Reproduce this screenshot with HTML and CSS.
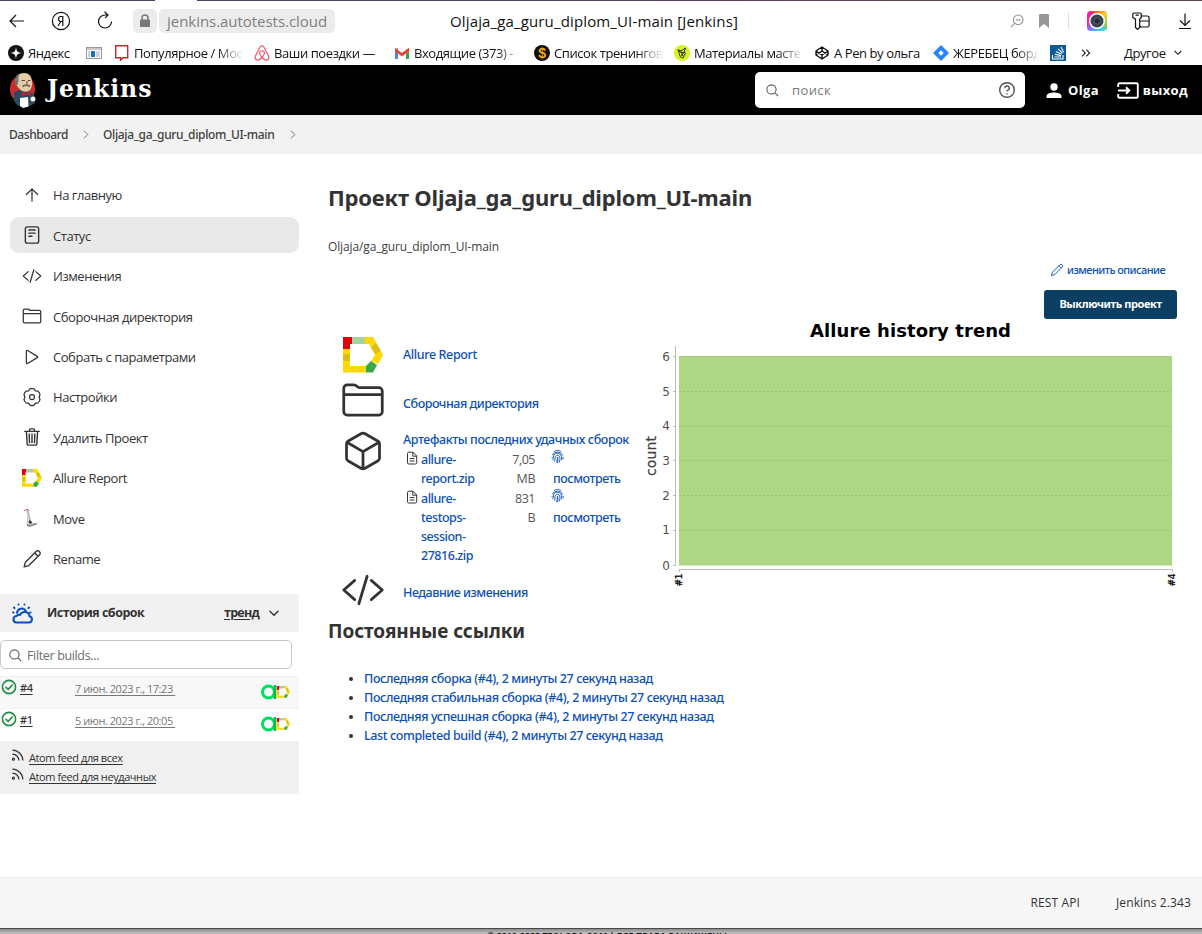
FILE: index.html
```html
<!DOCTYPE html>
<html lang="ru">
<head>
<meta charset="utf-8">
<title>Oljaja_ga_guru_diplom_UI-main [Jenkins]</title>
<link rel="stylesheet" href="styles.css">
</head>
<body>
<svg class="defs" width="0" height="0" aria-hidden="true">
  <defs>
    <symbol id="folder" viewBox="0 0 512 512"><path d="M440 432H72a40 40 0 01-40-40V120a40 40 0 0140-40h75.89a40 40 0 0122.19 6.72l27.84 18.56a40 40 0 0022.19 6.72H440a40 40 0 0140 40v240a40 40 0 01-40 40zM32 192h448"/></symbol>
    <symbol id="code" viewBox="0 0 512 512"><path d="M160 368L32 256l128-112M352 368l128-112-128-112M304 96l-96 320"/></symbol>
    <symbol id="pencil" viewBox="0 0 24 24"><path d="M2.5 21.5l1.6-5.6L17.2 2.8a2.3 2.3 0 013.3 0l.7.7a2.3 2.3 0 010 3.3L8.1 19.900zM15.300 4.700l4 4"/></symbol>
    <symbol id="search" viewBox="0 0 512 512"><path d="M221 64a157 157 0 10157 157A157 157 0 00221 64zM338 338l110 110"/></symbol>
    <symbol id="allure" viewBox="0 0 40 36">
      <path fill="#ffd900" d="M0 12h7v17h16v6.500H0z"/><path fill="#dcbf14" d="M0 17h7v7H0z"/>
      <path fill="#e3000f" d="M0 0h9v7H7v5H0z"/><path fill="#a5d3a0" d="M9 0h14v7H9z"/>
      <path fill="#ffd900" d="M22 0h8l10 18-5 9-7-3 4-6-6-11h-4z"/><path fill="#dcbf14" d="M33 6l5 8-6 3-4-7z"/>
      <path fill="#3aa844" d="M23 29l5-5 6 4-4 7.500h-7z"/>
    </symbol>
    <symbol id="check" viewBox="0 0 16 16"><circle cx="8" cy="8" r="6.600"/><path d="M5 8.200l2.200 2.200 4-4.400"/></symbol>
    <symbol id="feed" viewBox="0 0 14 14"><path d="M1.500 1.200A11.500 11.500 0 0112.800 12.500M1.500 5.500a7 7 0 017 7"/><circle cx="2.600" cy="11" r="1.100"/></symbol>
    <symbol id="file" viewBox="0 0 12 14"><path d="M1.500 2.500A1.300 1.300 0 012.800 1.200H7L10.700 5v6.700a1.300 1.300 0 01-1.300 1.300H2.800a1.300 1.300 0 01-1.300-1.300zM6.800 1.200V5.200H10.700M3.700 7.600h4.800M3.700 10h4.800"/></symbol>
    <symbol id="finger" viewBox="0 0 14 16"><path d="M3 3.200C5.500.8 9 1 11.200 3.300M1.300 6.700C3.300 2.300 10.400 2.100 12.600 6.800M2 12c.7-1.600.2-3 .7-4.700 1.300-3.700 7.300-3.500 8.500.3.400 1.500.3 3 .1 4.400M3.600 13.500c1.200-2 .4-3.900 1-5.300 1-1.900 4-1.800 4.800.2.500 1.700.2 3.900-.4 5.900M5.700 14.700c1.200-2 1-4.100 1.300-6 .8 2 .5 4.500 0 6.300M1 9.500l.3-1M13 8.500l.1 2.500"/></symbol>
    <symbol id="ao" viewBox="0 0 29 16"><circle cx="7.500" cy="8" r="6" fill="none" stroke="#00e05a" stroke-width="3"/><path d="M12.800 1h2.400v14h-2.400z" fill="#0aba4c"/><use href="#allure" x="15.500" y="2" width="13.500" height="12"/></symbol>
    <linearGradient id="cam" x1="0" y1="0" x2="1" y2="1"><stop offset="0" stop-color="#ef2297"/><stop offset=".3" stop-color="#f0268b"/><stop offset=".5" stop-color="#8a6cff"/><stop offset=".75" stop-color="#35c8f2"/><stop offset="1" stop-color="#5be0b0"/></linearGradient>
    <linearGradient id="cam2" x1="0" y1="0" x2="1" y2="1"><stop offset="0" stop-color="#ff4a1a"/><stop offset=".5" stop-color="#ffd21a"/><stop offset="1" stop-color="#3cd070"/></linearGradient>
  </defs>
</svg>

<div class="chrome">
  <div class="tabline"></div>
  <div class="toolbar">
    <svg class="tb-back" width="16" height="14" viewBox="0 0 16 14"><path d="M15 7H1.500M7 1L1 7l6 6"/></svg>
    <svg class="tb-ya" width="20" height="20" viewBox="0 0 20 20"><circle cx="10" cy="10" r="8.600"/><path d="M11.800 15V5.500H10a2.400 2.400 0 000 5h1.800M9.800 10.500L7 15"/></svg>
    <svg class="tb-reload" width="16" height="18" viewBox="0 0 16 18"><path d="M14.500 10.500A6.500 6.500 0 118 4h3M7.500.800L11 4 8 7.200"/></svg>
    <span class="lock"><svg width="12" height="14" viewBox="0 0 12 14"><path class="shackle" d="M3 6V4a3 3 0 016 0v2"/><rect class="case" x="1" y="5.500" width="10" height="7.500" rx="1"/></svg></span>
    <span class="url">jenkins.autotests.cloud</span>
    <span class="page-title">Oljaja_ga_guru_diplom_UI-main [Jenkins]</span>
    <svg class="tb-zoom" width="14" height="14" viewBox="0 0 14 14"><circle cx="8.200" cy="5.800" r="4.800"/><path d="M4.800 9.200L.800 13.200M6 5.800h4.400"/></svg>
    <svg class="tb-mark" width="10" height="14" viewBox="0 0 10 14"><path d="M0 1a1 1 0 011-1h8a1 1 0 011 1v13L5 10l-5 4z" fill="#969696"/></svg>
    <span class="tb-sep"></span>
    <svg class="tb-cam" width="20" height="20" viewBox="0 0 20 20"><rect width="20" height="20" rx="4" fill="url(#cam)"/><path d="M6 0h10a4 4 0 014 4v12a4 4 0 01-1 2.600z" fill="url(#cam2)"/><circle cx="10" cy="10" r="8" fill="#fff"/><circle cx="10" cy="10" r="6.500" fill="#3a3f4b"/><circle cx="10" cy="10" r="3.200" fill="#1f2a3a" stroke="#56657a"/></svg>
    <svg class="tb-key" width="18" height="18" viewBox="0 0 18 18"><path d="M2 1h6a1.300 1.300 0 011.300 1.300V5.500L7.700 7v8.500L5.500 17.400l-2-1.900V7.200L.8 5.500V2.300A1.300 1.300 0 012 1zM3.500 3.200h3.300M9.500 4h5.800a1.800 1.800 0 011.800 1.800v7.400a1.800 1.800 0 01-1.800 1.800H9.500a1.500 1.500 0 01-1.500-1.500M8 9h9"/></svg>
    <svg class="tb-down" width="12" height="16" viewBox="0 0 12 16"><path d="M6 .500v11.500M1 7.500l5 5 5-5M0 15.500h12"/></svg>
  </div>
  <div class="bookmarks">
    <span class="bm b78"><svg width="16" height="16" viewBox="0 0 16 16"><circle cx="8" cy="8" r="8" fill="#111"/><path d="M8 2c.6 4.600 1.400 5.400 6 6-4.600.6-5.400 1.400-6 6-.6-4.600-1.400-5.400-6-6 4.600-.6 5.400-1.400 6-6z" fill="#fff"/></svg><span>Яндекс</span></span>
    <span class="bm b29"><svg width="16" height="12" viewBox="0 0 16 12"><rect x=".5" y=".5" width="15" height="11" fill="#fff" stroke="#999"/><path d="M1 2h14" stroke="#c8c8c8" stroke-width="2"/><rect x="5" y="4" width="4" height="6" fill="#1272c8"/><path d="M10 5h4M10 7h4M10 9h4M2 5h2M2 7h2M2 9h2" stroke="#9ab"/></svg></span>
    <span class="bm b139"><svg width="14" height="16" viewBox="0 0 14 16"><path d="M.700.700h12v12H8l-2.500 2.600v-2.600H.700z" fill="none" stroke="#c22a2a" stroke-width="1.400"/></svg><span class="wide fade">Популярное / Мос</span></span>
    <span class="bm b140"><svg width="16" height="16" viewBox="0 0 16 16"><path d="M8 12.500C5.500 9.500 5.200 8.300 5.600 7.300c.8-1.800 4-1.800 4.800 0 .4 1 .1 2.200-2.400 5.200-2 2.300-4.500 3.300-6 2-1.200-1-1-2.500-.4-3.800L5.800 2.500C6.800.3 9.200.3 10.200 2.500l4.200 8.200c.6 1.300.8 2.800-.4 3.800-1.500 1.300-4 .3-6-2z" fill="none" stroke="#f0566a" stroke-width="1.200"/></svg><span class="fade late">Ваши поездки —</span></span>
    <span class="bm b140"><svg width="16" height="12" viewBox="0 0 16 12"><path d="M1 12V1.500h3V12z" fill="#4285f4"/><path d="M12 12V2h3v10z" fill="#34a853"/><path d="M12 2.500L15 1v3.500l-3 2z" fill="#fbbc04"/><path d="M1 .800L8 6l7-5.200v3.400L8 9.500 1 4.200z" fill="#ea4335"/></svg><span class="fade">Входящие (373) -</span></span>
    <span class="bm b140"><svg width="16" height="16" viewBox="0 0 16 16"><circle cx="8" cy="8" r="8" fill="#111"/><text x="8" y="13" text-anchor="middle" class="dollar">$</text></svg><span class="fade">Список тренингов</span></span>
    <span class="bm b141"><svg width="16" height="16" viewBox="0 0 16 16"><circle cx="8" cy="8" r="8" fill="#d8f51a"/><path d="M4 4.500l3 1.500 4.500-3-1.500 4 1.500 1-2.500 5-3-1.500-1-4zM7 7l2 4M10 7l-3 4M4 6l6 2" fill="none" stroke="#333"/></svg><span class="fade">Материалы масте</span></span>
    <span class="bm b118"><svg width="14" height="14" viewBox="0 0 14 14"><path d="M7 1l6 4v4l-6 4-6-4V5zM7 1v4M7 9v4M1 5l6 4 6-4M1 9l6-4 6 4" fill="none" stroke="#111" stroke-width="1.400" stroke-linejoin="round"/></svg><span class="pen">A Pen by ольга</span></span>
    <span class="bm b117"><svg width="16" height="16" viewBox="0 0 16 16"><path d="M8 0l8 8-8 8-8-8z" fill="#2684ff"/><path d="M8 5.300L10.700 8 8 10.700 5.300 8z" fill="#fff"/></svg><span class="fade">ЖЕРЕБЕЦ борд</span></span>
    <span class="bm b31"><svg width="16" height="16" viewBox="0 0 16 16"><rect width="16" height="16" fill="#0a5a9c"/><path d="M2.500 10v4h10.500v-4M4.500 12h6.500M4.700 9.300l6.300 1.300M5.800 6.400l5.800 2.800M8 3.800l4.500 4.400M11 2l2.600 5.200" fill="none" stroke="#fff" stroke-width="1.100"/></svg></span>
    <span class="bm b43"><svg width="10" height="8" viewBox="0 0 10 8"><path d="M1 .7L4.300 4 1 7.300M5.300.7L8.600 4 5.300 7.300" fill="none" stroke="#222" stroke-width="1.100"/></svg></span>
    <span class="bm other"><span>Другое</span><svg width="8" height="6" viewBox="0 0 8 6"><path d="M.7 1L4 4.300 7.300 1" fill="none" stroke="#222" stroke-width="1.100"/></svg></span>
  </div>
</div>

<header class="header">
  <svg class="butler" width="28" height="37" viewBox="0 0 28 37">
    <ellipse cx="13.500" cy="17" rx="12.500" ry="14" fill="#c9302c"/>
    <path d="M5 20l6-2 8 1 6 3 1 9-5 3H9l-4-5z" fill="#2c4a5e"/>
    <path d="M7 10C7 4 10 1 15 1s7.500 3 8 8c.3 4 0 8-3.300 10-3 1.800-7 .5-9.500-2.500C8.500 15 7 13 7 10z" fill="#e6cba9"/>
    <path d="M7 14C5 9 6 3.500 10.500 1.500 9 4 10 8 9 12z" fill="#77736e"/>
    <path d="M13.500 14.500c2-1.800 5-1.500 7.500 0" fill="none" stroke="#6d6258" stroke-width="1.800"/>
    <path d="M12.500 8.500h3.500M19 8.500h2.500M18 9v3" fill="none" stroke="#5e4a3c" stroke-width="1.100"/>
    <path d="M12.500 19.500l5 2 4-2.500.5 4.500-4.500-1-4.500 1.500z" fill="#c4232a"/>
    <path d="M11 26l8-1 .5 9.500L14 36l-3-2z" fill="#fff"/><circle cx="24" cy="27" r="2.500" fill="#f4f4f4"/>
  </svg>
  <span class="brand">Jenkins</span>
  <div class="search">
    <svg class="line" width="15" height="15"><use href="#search"/></svg>
    <span>поиск</span>
    <svg class="help" width="18" height="18" viewBox="0 0 18 18"><circle cx="9" cy="9" r="7.300"/><path d="M6.800 7.200A2.200 2.200 0 119.800 9.200c-.6.300-.8.600-.8 1.300M9 12.300v1.200"/></svg>
  </div>
  <svg class="person" width="16" height="15" viewBox="0 0 16 15"><circle cx="8" cy="4" r="3.700" fill="#fff"/><path d="M.5 15v-2C.5 10.500 5 9.400 8 9.400s7.500 1.100 7.500 3.600v2z" fill="#fff"/></svg>
  <span class="hlink">Olga</span>
  <svg class="exit" width="22" height="17" viewBox="0 0 22 17"><path d="M1.200 5V2.500A1.300 1.300 0 012.500 1.200h17a1.300 1.300 0 011.300 1.300v12a1.300 1.300 0 01-1.300 1.300h-17a1.300 1.300 0 01-1.300-1.300V12M1 8.500h11M9 5.300l3.300 3.200L9 11.700"/></svg>
  <span class="hlink">выход</span>
</header>

<nav class="crumbs">
  <span class="c1">Dashboard</span>
  <svg width="6" height="9" viewBox="0 0 6 9"><path d="M1 .7L4.800 4.500 1 8.300"/></svg>
  <span class="c2">Oljaja_ga_guru_diplom_UI-main</span>
  <svg width="6" height="9" viewBox="0 0 6 9"><path d="M1 .7L4.800 4.500 1 8.300"/></svg>
</nav>

<div class="body">
  <aside class="side">
    <div class="tasks">
      <a class="task"><svg class="ic" viewBox="0 0 512 512"><path d="M112 244l144-144 144 144M256 120v292"/></svg>На главную</a>
      <a class="task active"><svg class="ic heavy" viewBox="0 0 512 512"><rect x="86" y="48" width="340" height="416" rx="48"/><path d="M176 128h160M176 208h160M176 288h80"/></svg>Статус</a>
      <a class="task"><svg class="ic" viewBox="0 0 512 512"><use href="#code"/></svg>Изменения</a>
      <a class="task"><svg class="ic" viewBox="0 0 512 512"><use href="#folder"/></svg>Сборочная директория</a>
      <a class="task"><svg class="ic" viewBox="0 0 512 512"><path d="M112 111v290c0 17.440 17 28.520 31 20.160l247.900-148.370c12.120-7.250 12.120-26.330 0-33.580L143 90.840c-14-8.360-31 2.720-31 20.160z"/></svg>Собрать с параметрами</a>
      <a class="task"><svg class="ic gear" viewBox="0 0 24 24"><path d="M9.580 2.300Q12 1.200 14.420 2.300L16.150 4.600 19.190 5.050Q21.400 6.600 21.610 9.240L20.500 12 21.610 14.760Q21.400 17.400 19.190 18.950L16.150 19.400 14.420 21.700Q12 22.800 9.580 21.700L7.850 19.400 4.810 18.950Q2.600 17.400 2.390 14.760L3.500 12 2.390 9.240Q2.600 6.600 4.810 5.050L7.850 4.600z"/><circle cx="12" cy="12" r="3"/></svg>Настройки</a>
      <a class="task"><svg class="ic heavy" viewBox="0 0 512 512"><path d="M112 112l20 320c.95 18.490 14.400 32 32 32h184c17.670 0 30.870-13.510 32-32l20-320M72 112h368M192 112V72a24 24 0 0124-24h80a24 24 0 0124 24v40M256 176v224M184 176l8 224M328 176l-8 224"/></svg>Удалить Проект</a>
      <a class="task"><svg class="ic logo"><use href="#allure"/></svg>Allure Report</a>
      <a class="task"><svg class="ic mv" viewBox="0 0 20 20"><path d="M2.500 2.500l3-1.300 1 1.300" fill="none" stroke="#d66" stroke-width="1.200"/><path d="M5.500 3l2.700 10" stroke="#b5b5b5" stroke-width="2"/><path d="M6 8l-1 9 10-2" fill="none" stroke="#c5c0b8" stroke-width="1"/><path d="M5 16l3 1 6-2 1 1.500-7 2.200-3-.5z" fill="#888"/><path d="M7 12l3.500 2-2 2-2-1z" fill="#333"/></svg>Move</a>
      <a class="task"><svg class="ic pen20"><use href="#pencil"/></svg>Rename</a>
    </div>
    <section class="builds">
      <div class="bh-head">
        <svg width="24" height="22" viewBox="0 0 24 22"><path d="M6 20.500h13a3.200 3.200 0 00.5-6.300 5 5 0 00-9.500-1.300A4 4 0 006.500 14a3.300 3.300 0 00-.5 6.500zM7 10.800A4.700 4.700 0 0116 9.500"/><path d="M8.500 2.500v.01M14.500 2.500v.01M4 5.500l.6.6M19 5.500l-.6.6M3 10.500h.5M20 10.500h.5"/></svg>
        <span class="bh-title">История сборок</span>
        <span class="trend">тренд</span>
        <svg class="chev" width="10" height="7" viewBox="0 0 10 7"><path d="M1 1.200l4 4 4-4"/></svg>
      </div>
      <div class="filter"><svg class="line" width="15" height="15"><use href="#search"/></svg><span>Filter builds...</span></div>
      <div class="build odd"><svg class="ok" width="16" height="16"><use href="#check"/></svg><span class="num">#4</span><span class="date">7 июн. 2023 г., 17:23&nbsp;</span><svg class="ao" width="29" height="16"><use href="#ao"/></svg></div>
      <div class="build"><svg class="ok" width="16" height="16"><use href="#check"/></svg><span class="num">#1</span><span class="date">5 июн. 2023 г., 20:05&nbsp;</span><svg class="ao" width="29" height="16"><use href="#ao"/></svg></div>
      <div class="feeds">
        <div><svg width="13" height="13"><use href="#feed"/></svg><span>Atom feed для всех</span></div>
        <div><svg width="13" height="13"><use href="#feed"/></svg><span>Atom feed для неудачных</span></div>
      </div>
    </section>
  </aside>

  <main class="main">
    <h1>Проект Oljaja_ga_guru_diplom_UI-main</h1>
    <p class="fullname">Oljaja/ga_guru_diplom_UI-main</p>
    <div class="actions">
      <a class="edit"><svg width="14" height="14"><use href="#pencil"/></svg>изменить описание</a>
      <button class="disable">Выключить проект</button>
    </div>
    <div class="content">
      <div class="links">
        <div class="row r1"><svg class="al" width="40" height="36"><use href="#allure"/></svg><a>Allure Report</a></div>
        <div class="row r2"><svg class="big" width="44" height="44"><use href="#folder"/></svg><a>Сборочная директория</a></div>
        <div class="row r3">
          <svg class="big" width="44" height="44" viewBox="0 0 512 512"><path d="M448 341.370V170.610A32 32 0 00432.110 143l-152-88.460a47.940 47.940 0 00-48.240 0L79.890 143A32 32 0 0064 170.610v170.760A32 32 0 0079.890 369l152 88.460a48 48 0 0048.240 0l152-88.460A32 32 0 00448 341.370zM69 154l187 110 187-110M256 464V264"/></svg>
          <div class="arts">
            <a>Артефакты последних удачных сборок</a>
            <div class="art"><svg class="fi" width="12" height="14"><use href="#file"/></svg><a>allure-<br>report.zip</a><span class="size">7,05<br>MB</span><span class="view"><svg width="13" height="15"><use href="#finger"/></svg><a>посмотреть</a></span></div>
            <div class="art"><svg class="fi" width="12" height="14"><use href="#file"/></svg><a>allure-<br>testops-<br>session-<br>27816.zip</a><span class="size">831<br>B</span><span class="view"><svg width="13" height="15"><use href="#finger"/></svg><a>посмотреть</a></span></div>
          </div>
        </div>
        <div class="row r4"><svg class="big" width="44" height="44"><use href="#code"/></svg><a>Недавние изменения</a></div>
      </div>
      <svg class="chart" width="540" height="275" viewBox="640 319 540 275">
        <text x="810" y="337" class="ct" textLength="201">Allure history trend</text>
        <rect x="679" y="356" width="493" height="209.500" fill="#aed684"/>
        <path class="grid" d="M679 356.500h493M679 391.500h493M679 426.500h493M679 460.500h493M679 495.500h493M679 530.500h493"/>
        <path class="axis" d="M675.500 346v220M673 356.500h2M673 391.500h2M673 426.500h2M673 460.500h2M673 495.500h2M673 530.500h2M673 565.500h2M679 569.500h494M679.500 570v2M1172.500 570v2"/>
        <g class="tick"><text x="670" y="361">6</text><text x="670" y="396">5</text><text x="670" y="430">4</text><text x="670" y="465">3</text><text x="670" y="500">2</text><text x="670" y="534">1</text><text x="670" y="569.500">0</text></g>
        <text class="cl" transform="translate(655.500 476) rotate(-90)" textLength="40">count</text>
        <text class="xl" transform="translate(682 586.500) rotate(-90)">#1</text>
        <text class="xl" transform="translate(1175 586.500) rotate(-90)">#4</text>
      </svg>
    </div>
    <h2>Постоянные ссылки</h2>
    <ul class="perma">
      <li><a>Последняя сборка (#4), 2 минуты 27 секунд назад</a></li>
      <li><a>Последняя стабильная сборка (#4), 2 минуты 27 секунд назад</a></li>
      <li><a>Последняя успешная сборка (#4), 2 минуты 27 секунд назад</a></li>
      <li><a>Last completed build (#4), 2 минуты 27 секунд назад</a></li>
    </ul>
  </main>
</div>

<footer class="footer"><span>REST API</span><span>Jenkins 2.343</span></footer>
<div class="under">© 2019-2023 TEQLORA.COM | ВСЕ ПРАВА ЗАЩИЩЕНЫ</div>
</body>
</html>
```
FILE: styles.css
```css
* { box-sizing: border-box; }
body {
  margin: 0;
  width: 1202px;
  height: 934px;
  overflow: hidden;
  display: flex;
  flex-direction: column;
  background: #fff;
  color: #333;
  font: 13px/19px "Open Sans", "Noto Sans", sans-serif;
}
svg { display: block; flex: none; }
.defs { position: absolute; }
h1, h2, p, ul { margin: 0; padding: 0; }
a { white-space: nowrap; color: #0b50b5; }

/* browser chrome */
.chrome { height: 65px; flex: none; color: #111; }
.tabline { height: 1px; background: linear-gradient(90deg, #4b4468 155px, #fff 155px, #fff 197px, #4b4468 197px, #5e4358 900px); }
.toolbar { height: 40px; display: flex; align-items: center; font-size: 15px; }
.toolbar > svg:not(.tb-cam):not(.tb-mark) { fill: none; stroke: #111; stroke-width: 1.2; }
.toolbar > svg.tb-zoom:not(.tb-mark) { stroke: #999; }
.tb-back { margin-left: 9px; }
.tb-ya { margin-left: 26px; }
.tb-reload { margin-left: 26px; margin-top: -2px; }
.lock {
  width: 24px; height: 24px; margin-left: 20px;
  display: flex; align-items: center; justify-content: center;
  background: #ececec; border-radius: 5px;
}
.shackle { fill: none; stroke: #777; stroke-width: 1.5; }
.case { fill: #777; }
.url {
  width: 176px; height: 24px; margin-left: 2px; padding-left: 8px;
  line-height: 24px; letter-spacing: -.04px;
  background: #ececec; border-radius: 5px; color: #808080;
}
.page-title { width: 290px; margin-left: 115px; letter-spacing: .14px; white-space: nowrap; }
.tb-zoom { margin-left: 270px; }
.tb-mark { margin-left: 15px; }
.tb-sep { width: 1px; height: 16px; margin-left: 19px; background: #ddd; }
.tb-cam { margin-left: 18px; }
.tb-key { margin-left: 25px; }
.tb-down { margin-left: 29px; }
.bookmarks { height: 24px; display: flex; align-items: center; padding-left: 8px; letter-spacing: -.42px; }
.bm { display: flex; align-items: center; flex: none; height: 24px; white-space: nowrap; }
.bm > svg + span { margin-left: 4px; }
.bm > svg + .wide { margin-left: 5px; }
.bm > svg + .pen { margin-left: 5px; }
.fade {
  width: 112px;
  -webkit-mask-image: linear-gradient(90deg, #000 74%, transparent 98%);
  mask-image: linear-gradient(90deg, #000 74%, transparent 98%);
}
.late { -webkit-mask-image: linear-gradient(90deg, #000 88%, transparent); mask-image: linear-gradient(90deg, #000 88%, transparent); }
.b117 .fade { width: 88px; }
.b78 { width: 78px; } .b29 { width: 29px; } .b139 { width: 139px; }
.b140 { width: 140px; } .b141 { width: 141px; } .b118 { width: 118px; }
.b117 { width: 117px; } .b31 { width: 31px; } .b43 { width: 43px; }
.other svg { margin-left: 8px; }
.dollar { font: bold 14px "Liberation Sans", sans-serif; fill: #f7a90c; }

/* Jenkins header */
.header { height: 50px; flex: none; display: flex; align-items: center; background: #000; color: #fff; }
.butler { margin-left: 9px; }
.brand { width: 110px; margin-left: 10px; margin-top: -3px; font: bold 23.5px/30px "DejaVu Serif", serif; letter-spacing: .95px; }
.search {
  width: 270px; height: 36px; margin-left: 598px; padding: 0 9px 0 10px;
  display: flex; align-items: center;
  background: #fff; border-radius: 5px; color: #777;
}
.search span { margin-left: 12px; letter-spacing: .38px; }
.help { margin-left: auto; fill: none; stroke: #4b545c; stroke-width: 1.4; }
.line { fill: none; stroke: #555; stroke-width: 36; }
.person { margin-left: 21px; }
.hlink { margin-left: 6px; font-weight: 700; letter-spacing: .33px; }
.exit { margin-left: 18px; fill: none; stroke: #fff; stroke-width: 1.9; }
.exit + .hlink { margin-left: 4px; }

/* breadcrumbs */
.crumbs { height: 39px; flex: none; display: flex; align-items: center; padding-left: 9px; background: #f2f2f2; font: 500 12px/19px "Noto Sans", sans-serif; color: #404040; white-space: nowrap; }
.crumbs svg { fill: none; stroke: #777; margin-left: 15px; }
.c1 { width: 59px; letter-spacing: -.43px; }
.c2 { width: 172px; margin-left: 14px; letter-spacing: -.35px; }

.body { height: 723px; flex: none; display: flex; }
.side { width: 299px; flex: none; }

.tasks { padding: 23px 0 0 10px; display: flex; flex-direction: column; gap: 4.45px; }
.task { height: 36px; display: flex; align-items: center; padding: 1.500px 0 0 12px; border-radius: 9px; letter-spacing: -.45px; color: #333; }
.task.active { background: #e9e9e9; padding-top: 2px; }
.ic { width: 20px; height: 20px; margin: -2px 11px 0 0; fill: none; stroke: #333; stroke-width: 32; stroke-linecap: round; stroke-linejoin: round; }
.ic.heavy { stroke-width: 36; }
.ic.gear { stroke-width: 1.5; }
.ic.pen20 { stroke-width: 1.6; }
.ic.logo, .ic.mv { stroke: none; }

/* build history */
.builds { margin-top: 17px; }
.bh-head { height: 38px; display: flex; align-items: center; padding-left: 10px; background: #f1f1f1; }
.bh-head svg { fill: none; stroke: #0b4fb8; stroke-width: 2; stroke-linecap: round; }
.bh-title { width: 163px; margin-left: 13px; }
.bh-title, .trend { font-size: 12.5px; font-weight: 700; letter-spacing: -.5px; margin-top: -1px; }
.trend { width: 35px; margin-left: 14px; text-decoration: underline; text-underline-offset: 2px; white-space: nowrap; letter-spacing: -.75px; }
.bh-head .chev { margin-left: 10px; margin-top: 1px; stroke: #333; stroke-width: 1.4; }
.filter { width: 292px; height: 29px; margin: 8px 0 7px; display: flex; align-items: center; padding: 2px 0 0 7px; border: 1px solid #c0c8ce; border-radius: 5px; color: #6d6d6d; font-size: 12.5px; letter-spacing: -.35px; }
.filter span { margin-left: 4px; }
.build { height: 32.500px; display: flex; padding-left: 1px; border-top: 1px solid #f1f1f1; font-size: 11px; }
.build.odd { background: #f8f8f8; }
.ok { margin-top: 2px; fill: none; stroke: #1e8f45; stroke-width: 1.6; stroke-linecap: round; stroke-linejoin: round; }
.num, .date { text-decoration: underline; text-underline-offset: 2px; white-space: nowrap; }
.num { width: 13px; margin: 1px 0 0 3px; letter-spacing: -.4px; font-family: "Noto Sans", sans-serif; font-weight: 500; }
.date { width: 100px; margin: 2px 0 0 42px; color: #777; letter-spacing: -.46px; }
.ao { margin: 7px 0 0 86px; }
.feeds { height: 53px; padding: 7px 0 0 11px; background: #f0f0f0; font-size: 11px; letter-spacing: -.42px; }
.feeds div { display: flex; height: 19px; }
.feeds svg { margin-top: 1px; fill: none; stroke: #333; stroke-width: 1.3; }
.feeds span { margin-left: 5px; text-decoration: underline; text-underline-offset: 2px; }

/* main panel */
.main { flex: 1; padding: 28px 25px 0 29px; }
h1 { height: 30px; font: 700 22px/30px "Noto Sans", sans-serif; letter-spacing: -.18px; color: #333; }
.fullname { margin-top: 25px; height: 19px; font-size: 12px; letter-spacing: -.12px; color: #404040; }
.actions { margin-top: 4px; height: 59px; padding-right: 0; display: flex; flex-direction: column; align-items: flex-end; }
.edit { display: flex; align-items: center; height: 19px; margin-right: 15px; font: 500 11px/19px "Noto Sans", sans-serif; letter-spacing: -.57px; }
.edit svg { margin-right: 3px; fill: none; stroke: #0b50b5; stroke-width: 1.6; }
.disable { width: 133px; height: 29px; margin: 11px 3px 0 0; padding: 0 0 2px; border: 0; border-radius: 3px; background: #0a3e62; color: #fff; font: 700 11px/27px "Noto Sans", sans-serif; letter-spacing: -.41px; }
.content { height: 287px; display: flex; font-family: "Noto Sans", sans-serif; font-size: 12.5px; font-weight: 500; letter-spacing: -.47px; }
.links { width: 312px; flex: none; padding: 18px 0 0 15px; }
.row { display: flex; }
.row > a { margin-left: 20px; }
.r1 { height: 40px; }
.r1 a { margin-top: 8px; letter-spacing: -.38px; }
.big { margin: 1px 0 0 -2px; fill: none; stroke: #333; stroke-width: 32; stroke-linecap: round; stroke-linejoin: round; }
.row > .big + a { margin-left: 18px; }
.r2 { height: 51px; }
.r2 a { margin-top: 17px; }
.r3 { height: 139px; }
.arts { margin-left: 18px; margin-top: 2px; }
.arts > a { letter-spacing: -.41px; display: block; height: 20px; }
.art { display: flex; line-height: 19px; }
.fi { margin: 1px 3px 0 3px; fill: none; stroke: #333; }
.art > a { width: 70px; }
.size { width: 44px; text-align: right; color: #555; font-family: "Open Sans", sans-serif; font-weight: 400; }
.view { margin-left: 18px; display: flex; flex-direction: column; height: 39px; }
.view svg { margin: -1px 0 5px -2px; fill: none; stroke: #0b50b5; stroke-width: 1; }
.r4 a { margin-top: 16px; }
.ct { font: bold 18px "DejaVu Sans", sans-serif; fill: #000; letter-spacing: 0; }
.grid { fill: none; stroke: #9cc375; stroke-dasharray: 2 2; }
.axis { fill: none; stroke: #bbb; }
.tick { font: 12px "DejaVu Sans", sans-serif; fill: #505050; text-anchor: end; letter-spacing: 0; }
.cl { font: 14px "DejaVu Sans", sans-serif; fill: #404040; stroke: #404040; stroke-width: .2; letter-spacing: 0; }
.xl { font: 9px "DejaVu Sans", sans-serif; fill: #000; stroke: #000; stroke-width: .3; letter-spacing: -.3px; }
h2 { margin-top: 12px; height: 26px; font: 700 19px/26px "Noto Sans", sans-serif; letter-spacing: -.07px; }
.perma { margin-top: 25px; padding-left: 36px; font: 500 12.5px/19px "Noto Sans", sans-serif; letter-spacing: -.39px; }
.perma li { height: 19px; }

.footer { height: 51px; flex: none; display: flex; align-items: center; justify-content: flex-end; gap: 36px; padding: 0 11px 2px 0; border-top: 1px solid #ececec; background: #f7f7f7; font-size: 12px; letter-spacing: .12px; }
.under { height: 6px; flex: none; overflow: hidden; padding-left: 487px; border-top: 1px solid #4a4a4a; background: linear-gradient(#8c8c8c, #c4c4c4); color: #111; font: bold 8.900px/14px "Open Sans", sans-serif; }
```
